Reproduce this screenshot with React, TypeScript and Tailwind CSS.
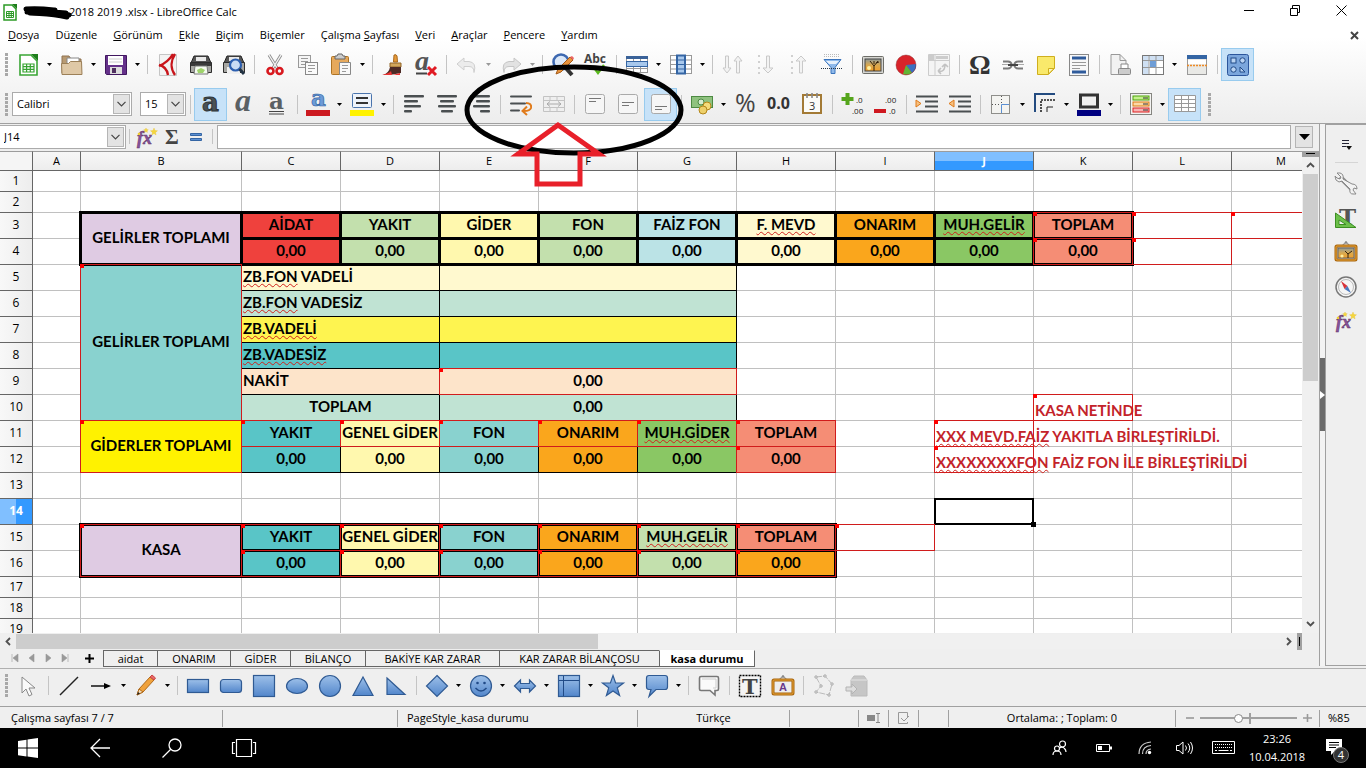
import React from "react";

const UI = "font-['Open_Sans','Noto_Sans',sans-serif]";

/* ---------- small helpers ---------- */

function Svg({ children, w = 24, h = 24 }: { children: React.ReactNode; w?: number; h?: number }) {
    return (
        <svg width={w} height={h} viewBox={`0 0 ${w} ${h}`} fill="none" className="block shrink-0 overflow-visible" aria-hidden="true">
            {children}
        </svg>
    );
}

function Tool({ label, active, more, children }: { label: string; active?: boolean; more?: boolean | "off"; children: React.ReactNode }) {
    return (
        <div className="flex items-center shrink-0">
            <button
                type="button"
                aria-label={label}
                className={`w-[33px] h-[33px] flex items-center justify-center border ${active ? "bg-[#c7e2f8] border-[#98cbee]" : "border-transparent"}`}
            >
                <Svg>{children}</Svg>
            </button>
            {more && (
                <button type="button" aria-label={`${label} menu`} className="w-[11px] h-[33px] flex items-center justify-center">
                    <svg width="5" height="3" viewBox="0 0 5 3" className="block"><path d="M0 0h5L2.5 3z" fill={more === "off" ? "#999" : "#000"} /></svg>
                </button>
            )}
        </div>
    );
}

const Sep = () => <div className="w-2 flex justify-center shrink-0"><div className="w-px h-[19px] bg-[#c4c4c4]" /></div>;

const Grip = () => (
    <div className="w-[5px] h-[23px] shrink-0 flex flex-col justify-between items-center">
        {[0, 1, 2, 3, 4, 5].map((i) => <div key={i} className="w-[3px] h-[3px] bg-[#a8a8a8]" />)}
    </div>
);

const Chevron = () => <svg width="9" height="6" viewBox="0 0 9 6" className="block"><path d="M.5 .8l4 4 4-4" fill="none" stroke="#444" strokeWidth="1.2" /></svg>;

const Lines = ({ xs }: { xs: [number, number][] }) => (
    <>
        {xs.map(([x, w], i) => <rect key={i} x={x} y={3 + i * 5} width={w} height="2.4" rx="1" fill="#4a4f51" />)}
    </>
);

const Fx = () => (
    <>
        <text x="2" y="18" fontFamily="Liberation Serif" fontStyle="italic" fontWeight="bold" fontSize="18" fill="#8a529b" stroke="#5c3566" strokeWidth=".5">fx</text>
        <path d="M19 2l1 2.500 2.500.3-2 1.600.6 2.600-2.100-1.400-2.200 1.400.7-2.600-2-1.600 2.500-.3zM11 2l.7 1.500 1.600.3-1.200 1 .3 1.600-1.400-.9-1.500.9.4-1.600-1.200-1 1.600-.3zM3 7h2v2H3z" fill="#f5d63d" stroke="#e0b91e" strokeWidth=".3" />
    </>
);

const Picture = () => (
    <>
        <rect x="1.500" y="3.500" width="21" height="17" rx="1" fill="#d5d5d0" stroke="#6d6d68" />
        <rect x="4" y="6" width="16" height="12" fill="url(#dusk)" stroke="#444" />
        <circle cx="8" cy="15" r="2" fill="#fff0a0" />
        <path d="M13 18v-5L9 8m4 5l4-5m-4 3V8m2 2l3-1" stroke="#35220c" />
    </>
);

const Frame = ({ children }: { children: React.ReactNode }) => (
    <>
        <path d="M7 7l5-5 5 5" stroke="#999" strokeWidth="1.200" />
        <circle cx="12" cy="2.500" r="1.200" fill="#888" />
        <rect x="2" y="6" width="20" height="14" rx="1" fill="#eee" stroke="#a8640b" strokeWidth="3" />
        <rect x="2" y="6" width="20" height="14" rx="1" stroke="#e9a53a" />
        {children}
    </>
);

const Cond = () => (
    <>
        <rect x="1.500" y="1.500" width="21" height="21" fill="#f3f3f1" stroke="#858580" />
        <rect x="4" y="4" width="16" height="4" fill="#c3f08c" stroke="#4ea30b" />
        <rect x="4" y="10" width="16" height="4" fill="#fbd9a8" stroke="#e07a10" />
        <rect x="4" y="16" width="16" height="4" fill="#f7b3b3" stroke="#d22" />
        <path d="M14 6h5M14 12h5M14 18h5" stroke="#333" />
    </>
);

/* ---------- sheet data ---------- */

type Cell = {
    t?: string;
    bad?: string;
    cs?: number;
    rs?: number;
    bg?: string;
    line?: "thick" | "thin" | "red" | "both";
    dot?: boolean;
    left?: boolean;
    red?: boolean;
    active?: boolean;
};

const lilac = "bg-[#dfcbe3]";
const green = "bg-[#c3e0ad]";
const leaf = "bg-[#8ac764]";
const cream = "bg-[#fff8ae]";
const pale = "bg-[#fff9cf]";
const orange = "bg-[#faa61c]";
const salmon = "bg-[#f58d75]";
const aqua = "bg-[#89d2cf]";
const teal = "bg-[#59c5c7]";
const mint = "bg-[#c0e3d3]";
const peach = "bg-[#fde4ca]";
const crimson = "bg-[#ef413d]";
const sky = "bg-[#bbe3e6]";
const lemon = "bg-[#fef450]";

const blank = (n: number): Cell[] => Array.from({ length: n }, () => ({}));
const Z = "0,00";

const rows: { n: number; h: string; cells: Cell[] }[] = [
    { n: 1, h: "h-[21px]", cells: blank(13) },
    { n: 2, h: "h-[21px]", cells: blank(13) },
    {
        n: 3, h: "h-[26px]", cells: [
            {},
            { t: "GELİRLER TOPLAMI", rs: 2, bg: lilac, line: "thick" },
            { t: "AİDAT", bg: crimson, line: "thick" },
            { t: "YAKIT", bg: green, line: "thick" },
            { t: "GİDER", bg: cream, line: "thick" },
            { t: "FON", bg: green, line: "thick" },
            { t: "FAİZ FON", bg: sky, line: "thick" },
            { bad: "F. MEVD", bg: pale, line: "thick" },
            { t: "ONARIM", bg: orange, line: "thick" },
            { bad: "MUH.GELİR", bg: leaf, line: "thick" },
            { t: "TOPLAM", bg: salmon, line: "both", dot: true },
            { line: "red", dot: true },
            { line: "red", dot: true },
        ],
    },
    {
        n: 4, h: "h-[26px]", cells: [
            {},
            ...[crimson, green, cream, green, sky, pale, orange, leaf].map((bg): Cell => ({ t: Z, bg, line: "thick" })),
            { t: Z, bg: salmon, line: "both", dot: true },
            { line: "red", dot: true },
            {},
        ],
    },
    {
        n: 5, h: "h-[26px]", cells: [
            {},
            { t: "GELİRLER TOPLAMI", rs: 6, bg: aqua, line: "red", dot: true },
            { bad: "ZB.FON", t: " VADELİ", cs: 2, left: true, bg: pale, line: "thin" },
            { cs: 3, bg: pale, line: "thin" },
            ...blank(6),
        ],
    },
    { n: 6, h: "h-[26px]", cells: [{}, { bad: "ZB.FON", t: " VADESİZ", cs: 2, left: true, bg: mint, line: "thin" }, { cs: 3, bg: mint, line: "thin" }, ...blank(6)] },
    { n: 7, h: "h-[26px]", cells: [{}, { bad: "ZB.VADELİ", cs: 2, left: true, bg: lemon, line: "thin" }, { cs: 3, bg: lemon, line: "thin" }, ...blank(6)] },
    { n: 8, h: "h-[26px]", cells: [{}, { bad: "ZB.VADESİZ", cs: 2, left: true, bg: teal, line: "thin" }, { cs: 3, bg: teal, line: "thin" }, ...blank(6)] },
    { n: 9, h: "h-[26px]", cells: [{}, { t: "NAKİT", cs: 2, left: true, bg: peach, line: "thin" }, { t: Z, cs: 3, bg: peach, line: "red", dot: true }, ...blank(6)] },
    {
        n: 10, h: "h-[26px]", cells: [
            {},
            { t: "TOPLAM", cs: 2, bg: mint, line: "thin" },
            { t: Z, cs: 3, bg: mint, line: "thin" },
            ...blank(3),
            { t: "KASA NETİNDE", left: true, red: true, line: "red", dot: true },
            ...blank(2),
        ],
    },
    {
        n: 11, h: "h-[26px]", cells: [
            {},
            { t: "GİDERLER TOPLAMI", rs: 2, bg: "bg-[#fff200]", line: "red", dot: true },
            { t: "YAKIT", bg: teal, line: "red", dot: true },
            { t: "GENEL GİDER", bg: cream, line: "red", dot: true },
            { t: "FON", bg: aqua, line: "red", dot: true },
            { t: "ONARIM", bg: orange, line: "red", dot: true },
            { bad: "MUH.GİDER", bg: leaf, line: "red", dot: true },
            { t: "TOPLAM", bg: salmon, line: "red", dot: true },
            {},
            { bad: "XXX MEVD.FAİZ", t: " YAKITLA BİRLEŞTİRİLDİ.", left: true, red: true, line: "red", dot: true },
            ...blank(3),
        ],
    },
    {
        n: 12, h: "h-[26px]", cells: [
            {},
            ...[teal, cream, aqua, orange, leaf].map((bg): Cell => ({ t: Z, bg, line: "thin" })),
            { t: Z, bg: salmon, line: "red", dot: true },
            {},
            { bad: "XXXXXXXXFON", t: " FAİZ FON İLE BİRLEŞTİRİLDİ", left: true, red: true, line: "red", dot: true },
            ...blank(3),
        ],
    },
    { n: 13, h: "h-[26px]", cells: blank(13) },
    { n: 14, h: "h-[26px]", cells: [...blank(9), { active: true }, ...blank(3)] },
    {
        n: 15, h: "h-[26px]", cells: [
            {},
            { t: "KASA", rs: 2, bg: lilac, line: "both", dot: true },
            { t: "YAKIT", bg: teal, line: "both", dot: true },
            { t: "GENEL GİDER", bg: cream, line: "both", dot: true },
            { t: "FON", bg: aqua, line: "both", dot: true },
            { t: "ONARIM", bg: orange, line: "both", dot: true },
            { bad: "MUH.GELİR", bg: green, line: "both", dot: true },
            { t: "TOPLAM", bg: salmon, line: "both", dot: true },
            { line: "red", dot: true },
            ...blank(4),
        ],
    },
    {
        n: 16, h: "h-[26px]", cells: [
            {},
            ...[teal, cream, aqua, orange, green, orange].map((bg): Cell => ({ t: Z, bg, line: "both", dot: true })),
            ...blank(5),
        ],
    },
    { n: 17, h: "h-[21px]", cells: blank(13) },
    { n: 18, h: "h-[21px]", cells: blank(13) },
    { n: 19, h: "h-[21px]", cells: blank(13) },
];

function SheetCell({ c }: { c: Cell }) {
    return (
        <td
            colSpan={c.cs}
            rowSpan={c.rs}
            className={`relative p-0 border-r border-b border-[#c0c0c0] whitespace-nowrap ${c.bg ?? ""} ${c.left ? "text-left pl-px" : "text-center"} ${c.red ? "text-[#c3232a] align-bottom" : "text-black align-middle"}`}
        >
            {(c.line === "thick" || c.line === "both") && <span className="absolute -inset-[2px] border-[3px] border-black z-10" />}
            {c.line === "thin" && <span className="absolute -inset-px border border-black z-10" />}
            {(c.line === "red" || c.line === "both") && <span className="absolute -inset-px border border-[#d01c1c] z-20" />}
            {c.dot && <span className="absolute -left-px -top-px w-1 h-1 bg-[#f00] z-20" />}
            {c.active && (
                <>
                    <span className="absolute -inset-px border-2 border-black z-20" />
                    <span className="absolute -right-[3px] -bottom-[3px] w-[5px] h-[5px] bg-black z-20" />
                </>
            )}
            {(c.t || c.bad) && (
                <span className={`relative z-10 block leading-[20px] ${c.red ? "" : "pb-[2px]"}`}>
                    {c.bad && <span className="underline decoration-wavy decoration-[#d0201c] decoration-1 underline-offset-1">{c.bad}</span>}
                    {c.t}
                </span>
            )}
        </td>
    );
}

function Sheet() {
    const head = "ABCDEFGHIJKLM".split("");
    return (
        <table className="table-fixed border-separate border-spacing-0 w-[1330px] font-['Lato','Open_Sans',sans-serif] font-bold text-[15px]">
            <colgroup>
                <col className="w-[33px]" />
                <col className="w-[48px]" />
                <col className="w-[161px]" />
                {head.slice(2).map((h) => <col key={h} className="w-[99px]" />)}
            </colgroup>
            <thead>
                <tr className={`h-5 text-[11px] ${UI}`}>
                    <th className="p-0 bg-[#f5f5f5] border-t border-t-[#9c9c9c] border-r border-b border-[#666]" />
                    {head.map((h) => (
                        <th
                            key={h}
                            scope="col"
                            className={`p-0 border-t border-t-[#9c9c9c] border-r border-b border-[#666] leading-4 ${h === "J" ? "bg-gradient-to-b from-[#80bfff] from-50% to-[#3399ff] to-50% text-white font-bold" : "bg-gradient-to-b from-[#f7f7f7] to-[#ededed] font-normal"}`}
                        >
                            {h}
                        </th>
                    ))}
                </tr>
            </thead>
            <tbody>
                {rows.map((r) => (
                    <tr key={r.n} className={r.h}>
                        <th
                            scope="row"
                            className={`p-0 border-r border-b border-[#666] text-xs leading-4 ${UI} ${r.n === 14 ? "bg-gradient-to-r from-[#80bfff] from-50% to-[#3399ff] to-50% text-white font-bold" : "bg-gradient-to-r from-[#f8f8f8] to-[#ededed] font-normal"}`}
                        >
                            {r.n}
                        </th>
                        {r.cells.map((c, i) => <SheetCell key={i} c={c} />)}
                    </tr>
                ))}
            </tbody>
        </table>
    );
}

/* ---------- window chrome ---------- */

const menus: [string, string, string][] = [
    ["", "D", "osya"], ["Dü", "z", "enle"], ["", "G", "örünüm"], ["", "E", "kle"], ["", "B", "içim"], ["Bi", "ç", "emler"],
    ["Çalışma ", "S", "ayfası"], ["", "V", "eri"], ["", "A", "raçlar"], ["", "P", "encere"], ["", "Y", "ardım"],
];

function TitleBar() {
    return (
        <header className="flex items-center h-6 pl-[3px]">
            <Svg w={14} h={18}>
                <path d="M1 2h8l4 4v11H1z" fill="#fff" stroke="#2c9a26" strokeWidth="1.500" />
                <path d="M9 1h5v5z" fill="#1e7d1b" />
                <path d="M3.500 8.500h7v6h-7zM3.500 10.500h7M3.500 12.500h7M6 8.500v6M8.300 8.500v6" stroke="#2c9a26" />
            </Svg>
            <svg width="50" height="16" viewBox="0 0 50 16" className="ml-[5px] block" aria-hidden="true">
                <path d="M4 5C16 4 24 5 33 6M5 8c12 1 26-1 42 3M8 9c12 1 20 0 37 4M31 8l13 1" fill="none" stroke="#000" strokeWidth="5" strokeLinecap="round" />
            </svg>
            <h1 className="text-[11px] -ml-[3px] grow">2018 2019 .xlsx - LibreOffice Calc</h1>
            <button type="button" aria-label="Minimize" className="w-[46px] h-6 pb-1 flex items-center justify-center"><Svg w={11} h={11}><path d="M0 5.500h10" stroke="#000" /></Svg></button>
            <button type="button" aria-label="Restore" className="w-[46px] h-6 pb-1 flex items-center justify-center"><Svg w={11} h={11}><path d="M.5 3.500h7v7h-7zM2.500 3V.5h7v7H8" stroke="#000" /></Svg></button>
            <button type="button" aria-label="Close" className="w-[46px] h-6 pb-1 flex items-center justify-center"><Svg w={11} h={11}><path d="M.5.5l10 10M10.500.5l-10 10" stroke="#000" /></Svg></button>
            <div className="w-[2px]" />
        </header>
    );
}

function MenuBar() {
    return (
        <nav className="flex items-center h-[22px] pl-2 pr-[7px] gap-4 text-[11px]">
            {menus.map(([a, u, b]) => <button key={a + u + b} type="button">{a}<u>{u}</u>{b}</button>)}
            <button type="button" aria-label="Close document" className="ml-auto"><Svg w={9} h={9}><path d="M1 1l7 7M8 1L1 8" stroke="#444" strokeWidth="2" /></Svg></button>
        </nav>
    );
}

function StandardBar() {
    return (
        <div className="flex items-center h-[39px] pl-1 pb-[2px] overflow-hidden" role="toolbar" aria-label="Standard">
            <Grip /><div className="w-[2px]" />
            <Tool label="New" more>
                <path d="M4 2h11l6 6v14H4z" fill="#fff" stroke="#3aa535" strokeWidth="1.600" />
                <path d="M15 1h7v7z" fill="#1e7d1b" />
                <path d="M7 11h11v8H7zM7 13.600h11M7 16.300h11M10.600 11v8M14.300 11v8" stroke="#36a331" strokeWidth="1.200" />
            </Tool>
            <Tool label="Open" more>
                <path d="M2 20V3h7l2 3h10v14z" fill="#b89a72" stroke="#8f7350" />
                <path d="M7 5h12v6H7z" fill="#fff" stroke="#888" />
                <path d="M1.500 10.500h7l2-2h11l.5 13H2z" fill="#dfc8a6" stroke="#9c8058" />
            </Tool>
            <Tool label="Save" more>
                <path d="M1.500 2.500h21v19h-20l-1-1z" fill="#65318a" stroke="#41175f" />
                <rect x="4" y="3" width="15" height="9" fill="#fff" />
                <path d="M5 6h13M5 9h13" stroke="#ccc" />
                <rect x="6" y="14" width="12" height="7" fill="#ddd" />
                <rect x="8" y="15" width="4" height="5" fill="#503060" />
            </Tool>
            <Sep />
            <Tool label="Export as PDF">
                <path d="M3.500 1.500h17v21h-17z" fill="#f3f3f3" stroke="#c5c5c5" />
                <path d="M17 1c-3 5-9 10-14 12M19 1c-4 6-5 14 0 21M3 12c5 1 8 4 9 10" stroke="#c8151b" strokeWidth="2.400" />
            </Tool>
            <Tool label="Print">
                <path d="M5 3h14l3 7H2z" fill="#555" stroke="#222" />
                <path d="M7 4h10v4H7z" fill="#e9e9e9" />
                <path d="M1.500 9.500h21v10h-21z" fill="#a8a8a4" stroke="#2d2d2d" />
                <path d="M2 10h20v3H2z" fill="#3a3a3a" />
                <path d="M6 13h12l1 8H5z" fill="#f4faef" stroke="#777" />
                <path d="M8 17l4-2 4 2-2 3H9z" fill="#9ed36a" />
            </Tool>
            <Tool label="Print Preview">
                <path d="M5 3h14l3 7H2z" fill="#555" stroke="#222" />
                <path d="M7 4h10v4H7z" fill="#e9e9e9" />
                <path d="M1.500 9.500h21v10h-21z" fill="#a8a8a4" stroke="#2d2d2d" />
                <path d="M5 14h13v7H5z" fill="#f0f0f0" />
                <circle cx="13.500" cy="12" r="5.500" fill="#c9dcf5" stroke="#2c5fb0" strokeWidth="2.200" />
                <path d="M17.500 16l4.500 5" stroke="#234" strokeWidth="3" />
            </Tool>
            <Sep />
            <Tool label="Cut">
                <path d="M6 2l8 13M18 2l-8 13" stroke="#8a8a8a" strokeWidth="3" /><path d="M6 2l8 13M18 2l-8 13" stroke="#f4f4f4" strokeWidth="1.400" />
                <circle cx="7.500" cy="18" r="3" stroke="#d8191f" strokeWidth="2.600" /><circle cx="16.500" cy="18" r="3" stroke="#d8191f" strokeWidth="2.600" />
            </Tool>
            <Tool label="Copy">
                <rect x="2.500" y="2.500" width="12" height="12" fill="#f5f5f5" stroke="#999" /><path d="M5 5.500h7M5 8.500h7M5 11.500h4" stroke="#999" />
                <rect x="9.500" y="9.500" width="12" height="12" fill="#fafafa" stroke="#888" /><path d="M12 12.500h7M12 15.500h7M12 18.500h4" stroke="#999" />
            </Tool>
            <Tool label="Paste" more>
                <rect x="2.500" y="3.500" width="17" height="18" rx="1" fill="#e6a95c" stroke="#ad7324" /><path d="M6 6V3h2l1-2h4l1 2h2v3z" fill="#ccc" stroke="#666" />
                <path d="M10.500 9.500h11v12h-11z" fill="#f8f8f8" stroke="#888" /><path d="M13 12.500h6M13 15.500h6M13 18.500h4" stroke="#999" />
            </Tool>
            <Sep />
            <Tool label="Clone Formatting">
                <path d="M13 2q2.500-1 3 1l.5 6h-4z" fill="#e59a3a" stroke="#a9681b" /><path d="M9 10h11v4H9z" fill="#d3a75c" stroke="#92662a" />
                <path d="M9 14h11v6q-8 2-18 2 6-2 7-8z" fill="#4d2a25" /><path d="M1 22q8-2 9-4l1 4zM12 22l7-2v2z" fill="#e33" />
            </Tool>
            <Tool label="Clear Formatting">
                <text x="1" y="17" fontFamily="Liberation Serif" fontStyle="italic" fontWeight="bold" fontSize="28" fill="#555">a</text>
                <path d="M2 20.500h11" stroke="#444" strokeWidth="2" /><path d="M14 14l8 8M22 14l-8 8" stroke="#e01b24" strokeWidth="3" />
            </Tool>
            <Sep />
            <Tool label="Undo" more="off"><path d="M2 11l7-6v3.500h5q8 1 5 11 0-6-5-6H9V17z" fill="#ececec" stroke="#cfcfcf" /></Tool>
            <Tool label="Redo" more="off"><path d="M22 11l-7-6v3.500h-5q-8 1-5 11 0-6 5-6h5V17z" fill="#e2e2e2" stroke="#c6c6c6" /></Tool>
            <Sep />
            <Tool label="Find & Replace">
                <circle cx="10" cy="9" r="7.500" fill="#dbe8f8" stroke="#3d68b0" strokeWidth="2.600" /><path d="M14 14l7 8" stroke="#333" strokeWidth="4" />
                <path d="M5 21l2-5L19 4l3 3L10 19z" fill="#e9933b" stroke="#a35a18" /><path d="M19 4l3 3 1-2-2-2z" fill="#e66" />
            </Tool>
            <Tool label="Spelling">
                <text x="0" y="10" fontFamily="Open Sans" fontWeight="bold" fontSize="12" fill="#444">Abc</text>
                <path d="M11 16l3 4 6-8" stroke="#58b81c" strokeWidth="2.400" />
            </Tool>
            <Sep />
            <Tool label="Row" more>
                <rect x="1.500" y="3.500" width="21" height="16" fill="#fff" stroke="#999" /><path d="M1 15.500h22M8.500 4v16M15.500 4v16" stroke="#999" />
                <rect x="1" y="3" width="22" height="3" fill="#3a6299" /><rect x="1.500" y="8.500" width="21" height="5" fill="#a8c8ec" stroke="#3465a4" />
            </Tool>
            <Tool label="Column" more>
                <rect x="1.500" y="2.500" width="21" height="18" fill="#fff" stroke="#999" /><path d="M1 7h22M1 11.500h22M1 16h22" stroke="#999" />
                <rect x="8" y="2.500" width="8" height="18" fill="#a8c8ec" stroke="#3465a4" strokeWidth="2" /><path d="M8 7h8M8 11.500h8M8 16h8" stroke="#3465a4" />
            </Tool>
            <Sep />
            <Tool label="Sort"><path d="M7.500 3v12H10l-4 5-4-5h2.500V3zM18.500 20V8H21l-4-5-4 5h2.500v12z" fill="#f3f3f3" stroke="#c9c9c9" /></Tool>
            <Tool label="Sort Ascending"><path d="M15.500 3v12H19l-5 5-5-5h3.500V3z" fill="#f3f3f3" stroke="#c9c9c9" /><path d="M4 2h2v2H4zM4 8h2v2H4zM4 14h2v2H4zM4 19h2v2H4z" fill="#d0d0d0" /></Tool>
            <Tool label="Sort Descending"><path d="M15.500 20V8H19l-5-5-5 5h3.500v12z" fill="#f3f3f3" stroke="#c9c9c9" /><path d="M4 2h2v2H4zM4 8h2v2H4zM4 14h2v2H4zM4 19h2v2H4z" fill="#d0d0d0" /></Tool>
            <Tool label="AutoFilter">
                <path d="M4 1.500h16M4 3.500h16" stroke="#bbb" strokeDasharray="1 1" />
                <path d="M4 6.500h17l-6 8v6h-4v-6z" fill="#8fb9ea" stroke="#3a74bd" /><path d="M6 8h13l-3 3H9z" fill="#e6f0fb" /><path d="M1 15.500h22" stroke="#234" strokeDasharray="1 1" />
            </Tool>
            <Sep />
            <Tool label="Insert Image"><Picture /></Tool>
            <Tool label="Insert Chart">
                <circle cx="12" cy="12" r="10" fill="#d8232a" /><path d="M12 12l10-1a10 10 0 0 1-4 9z" fill="#3b6fc0" /><path d="M12 12l6 8a10 10 0 0 1-9 1z" fill="#62b535" />
                <circle cx="12" cy="12" r="10" stroke="#7d1a1a" strokeOpacity=".4" />
            </Tool>
            <Tool label="Pivot Table">
                <path d="M1.500 1.500h21v21h-21zM8 2v20M2 7.500h20" stroke="#ccc" fill="#f4f4f4" /><path d="M2 2h5v5H2zM9 3h12v3H9z" fill="#ccc" />
                <path d="M11 18q7 2 7-7M11 18l3-3M11 18l3 3M18 11l-3 3M18 11l3 3" stroke="#c2c2c2" strokeWidth="1.600" />
            </Tool>
            <Sep />
            <Tool label="Special Character"><text x="1" y="21" fontFamily="Liberation Serif" fontWeight="bold" fontSize="27" fill="#333">Ω</text></Tool>
            <Tool label="Hyperlink">
                <path d="M2 8.500h5q3 0 4 3.500-1 3.500-4 3.500H2M22 8.500h-5q-3 0-4 3.500 1 3.500 4 3.500h5" stroke="#7a7a7a" strokeWidth="1.800" /><path d="M1 11.500h8M15 11.500h8" stroke="#aaa" /><path d="M7 12h10" stroke="#444" strokeWidth="2" />
            </Tool>
            <Tool label="Comment"><path d="M3.500 3.500h17v12l-6 6h-11z" fill="#f9e96b" stroke="#cfae1d" /><path d="M20 15.500h-5.500V21z" fill="#fff7b5" stroke="#cfae1d" /></Tool>
            <Tool label="Headers and Footers">
                <rect x="2.500" y="1.500" width="19" height="21" fill="#f8f8f8" stroke="#888" /><path d="M5 5h14M5 19h14" stroke="#2f5b9b" strokeWidth="3" /><path d="M5 9.500h14M5 12.500h14M5 15.500h8" stroke="#999" />
            </Tool>
            <Sep />
            <Tool label="Print Area">
                <path d="M3 1.500h9l6 6v14H3z" fill="#f2f2f2" stroke="#999" /><path d="M12 1.500v6h6" stroke="#999" />
                <path d="M13 11h7v5h-7z" fill="#fff" stroke="#888" /><rect x="10.500" y="15.500" width="12" height="6" rx="1" fill="#ccc" stroke="#888" />
            </Tool>
            <Tool label="Freeze Rows and Columns" more>
                <rect x="1.500" y="2.500" width="21" height="19" fill="#fff" stroke="#888" /><path d="M1.500 2.500h6v19h-6zM8 2.500h14V7H8z" fill="#cfe0f3" />
                <path d="M8 2v20M15 2v20M2 7.500h20M2 14.500h20" stroke="#999" /><path d="M9 8h6v6H9z" fill="#6e9dd6" /><path d="M1.500 2.500h21v19h-21z" stroke="#777" />
            </Tool>
            <Tool label="Split Window">
                <rect x="2.500" y="2.500" width="19" height="19" fill="#e9e9e6" stroke="#999" /><path d="M2 2h20v4H2z" fill="#3465a4" /><path d="M3 7h18v4H3z" fill="#fff" /><path d="M2 12.500h20" stroke="#f08a24" strokeWidth="1.400" strokeDasharray="2 1" />
            </Tool>
            <Sep />
            <Tool label="Show Draw Functions" active>
                <rect x="1.500" y="1.500" width="21" height="21" rx="2" fill="#7ba6dc" stroke="#2b559b" /><rect x="5" y="5" width="5" height="5" fill="#b9d3f2" stroke="#204a87" />
                <circle cx="16.500" cy="7.500" r="2.700" fill="#b9d3f2" stroke="#204a87" /><circle cx="7.500" cy="16.500" r="2.700" fill="#b9d3f2" stroke="#204a87" /><path d="M14 14v5h5z" fill="#b9d3f2" stroke="#204a87" />
            </Tool>
        </div>
    );
}

function FormatBar() {
    return (
        <div className="flex items-center h-[38px] pl-1 overflow-hidden" role="toolbar" aria-label="Formatting">
            <Grip />
            <label className="relative ml-[3px] w-[120px] h-6 flex shrink-0">
                <select aria-label="Font Name" className="appearance-none w-full h-full border border-[#ababab] bg-white pl-1 text-[11px] outline-none">
                    <option>Calibri</option>
                </select>
                <span className="absolute right-[2px] top-[2px] w-[17px] h-5 bg-[#e3e3e3] border border-[#b5b5b5] flex items-center justify-center pointer-events-none"><Chevron /></span>
            </label>
            <label className="relative ml-2 w-[46px] h-6 flex shrink-0">
                <select aria-label="Font Size" className="appearance-none w-full h-full border border-[#ababab] bg-white pl-1 text-[11px] outline-none">
                    <option>15</option>
                </select>
                <span className="absolute right-[2px] top-[2px] w-[17px] h-5 bg-[#e3e3e3] border border-[#b5b5b5] flex items-center justify-center pointer-events-none"><Chevron /></span>
            </label>
            <Sep />
            <Tool label="Bold" active><text x="3" y="19" fontFamily="DejaVu Serif" fontWeight="bold" fontSize="26" fill="#4a5257" stroke="#2e3436">a</text></Tool>
            <Tool label="Italic"><text x="3" y="19" fontFamily="Liberation Serif" fontStyle="italic" fontWeight="bold" fontSize="32" fill="#5a6063">a</text></Tool>
            <Tool label="Underline"><text x="4" y="17" fontFamily="DejaVu Serif" fontWeight="bold" fontSize="23" fill="#5a6063">a</text><path d="M4 19.500h15M4 22h15" stroke="#444" /></Tool>
            <Sep />
            <Tool label="Font Color" more><text x="5" y="14" fontFamily="DejaVu Serif" fontWeight="bold" fontSize="23" fill="#6c9bd8" stroke="#3465a4" strokeWidth=".7">a</text><path d="M0 18h24v6H0z" fill="#cc1a20" /></Tool>
            <Tool label="Highlighting" more>
                <rect x="2.500" y="1.500" width="19" height="14" rx="1" fill="#eef3fa" stroke="#4a74ad" /><path d="M6 6h12M6 11h12" stroke="#333" strokeWidth="2" /><path d="M0 18h24v6H0z" fill="#fff200" />
            </Tool>
            <Sep />
            <Tool label="Align Left"><Lines xs={[[2, 20], [2, 14], [2, 17], [2, 8]]} /></Tool>
            <Tool label="Center Horizontally"><Lines xs={[[2, 20], [5, 14], [3, 18], [6, 12]]} /></Tool>
            <Tool label="Align Right"><Lines xs={[[2, 20], [8, 14], [5, 17], [12, 10]]} /></Tool>
            <Sep />
            <Tool label="Wrap Text">
                <path d="M2 4.500h20M2 11.500h14M2 18.500h8" stroke="#4a4f51" strokeWidth="2" strokeLinecap="round" /><path d="M17 11q6 0 5 5-1 3-7 3M18 14.500l-4.500 4.500 4.500 4" stroke="#e07b1c" strokeWidth="2" />
            </Tool>
            <Tool label="Merge and Center Cells">
                <path d="M1.500 4.500h21v15h-21zM1.500 8.500h21M1.500 15.500h21M8 4v4M15 4v4M8 16v4M15 16v4" stroke="#c3c3c3" fill="#efefef" /><path d="M5 12h14M8 9.500L5 12l3 2.500M16 9.500l3 2.500-3 2.500" stroke="#aaa" />
            </Tool>
            <Sep />
            <Tool label="Align Top"><rect x="2.500" y="2.500" width="19" height="19" rx="2" fill="#f6f6f6" stroke="#aaa" /><path d="M6 6.500h12M6 9.500h7" stroke="#777" /></Tool>
            <Tool label="Center Vertically"><rect x="2.500" y="2.500" width="19" height="19" rx="2" fill="#f6f6f6" stroke="#aaa" /><path d="M6 10.500h12M6 13.500h7" stroke="#777" /></Tool>
            <Tool label="Align Bottom" active><rect x="2.500" y="2.500" width="19" height="19" rx="2" fill="#f6f6f6" stroke="#aaa" /><path d="M6 14.500h12M6 17.500h7" stroke="#777" /></Tool>
            <Sep />
            <Tool label="Format as Currency" more>
                <rect x="1.500" y="4.500" width="21" height="11" fill="#8fc27f" stroke="#4d8a43" /><circle cx="11" cy="10" r="3" fill="#d5ecd0" stroke="#4d8a43" />
                <circle cx="17" cy="14" r="4" fill="#f5dc7a" stroke="#b3861a" /><circle cx="13" cy="18" r="4" fill="#edd06a" stroke="#b3861a" />
            </Tool>
            <Tool label="Format as Percent"><text x="1" y="20" fontFamily="Open Sans" fontSize="25" fill="#444">%</text></Tool>
            <Tool label="Format as Number"><text x="0" y="17" fontFamily="Open Sans" fontWeight="bold" fontSize="16" fill="#333">0.0</text></Tool>
            <Tool label="Format as Date">
                <rect x="3" y="3" width="18" height="18" fill="#fbfbf8" stroke="#a37a35" strokeWidth="2" /><path d="M7 1v5M12 1v5M17 1v5" stroke="#888" strokeWidth="1.600" /><text x="9" y="18" fontFamily="Open Sans" fontSize="11" fill="#333">3</text>
            </Tool>
            <Sep />
            <Tool label="Add Decimal Place">
                <path d="M6.500 1v12M.5 7h12" stroke="#55a51c" strokeWidth="4" /><text x="15" y="11" fontFamily="Open Sans" fontSize="8" fill="#222">.0</text><text x="11" y="22" fontFamily="Open Sans" fontSize="8" fill="#222">.00</text>
            </Tool>
            <Tool label="Delete Decimal Place">
                <text x="11" y="11" fontFamily="Open Sans" fontSize="8" fill="#222">.00</text><path d="M0 19h12" stroke="#cf1820" strokeWidth="4" /><text x="15" y="22" fontFamily="Open Sans" fontSize="8" fill="#222">.0</text>
            </Tool>
            <Sep />
            <Tool label="Increase Indent"><path d="M1 4.500h22M10 9.500h13M10 14.500h13M1 19.500h22" stroke="#4a4f51" strokeWidth="2.200" /><path d="M1 8v7l5-3.500z" fill="#f6c080" stroke="#df7a1a" /></Tool>
            <Tool label="Decrease Indent"><path d="M1 4.500h22M10 9.500h13M10 14.500h13M1 19.500h22" stroke="#4a4f51" strokeWidth="2.200" /><path d="M6 8v7l-5-3.500z" fill="#f6c080" stroke="#df7a1a" /></Tool>
            <Sep />
            <Tool label="Borders" more>
                <rect x="2.500" y="3.500" width="18" height="18" fill="#f4f4f1" stroke="#8f8f8b" /><path d="M12.500 4v9M3 12.500h9" stroke="#555" strokeDasharray="1 2" /><path d="M12.500 21v-8.500H20" stroke="#5b8fd2" />
            </Tool>
            <Tool label="Border Style" more><path d="M2 20V2h20" stroke="#234b80" strokeWidth="2" /><path d="M8 20V8h14" stroke="#222" strokeWidth="1.600" strokeDasharray="2 1" /><path d="M14 20v-5h6" stroke="#222" /></Tool>
            <Tool label="Border Color" more><rect x="3.500" y="3" width="17" height="12" fill="#f0f0f0" stroke="#333" strokeWidth="3" /><path d="M0 18h24v6H0z" fill="#000080" /></Tool>
            <Sep />
            <Tool label="Conditional Formatting" more><Cond /></Tool>
            <Tool label="Grid Lines" active><path d="M1.500 3.500h21v16h-21zM1.500 7.500h21M1.500 11.500h21M1.500 15.500h21M8.500 3.500v16M15.500 3.500v16" fill="#fff" stroke="#999" /></Tool>
            <div className="w-[6px]" /><Grip />
        </div>
    );
}

function FormulaBar() {
    return (
        <div className="flex items-center h-[27px] pb-px bg-[#efefef] text-[11px]">
            <div className="flex w-[126px] h-6 border border-l-0 border-[#ababab] bg-white p-px shrink-0">
                <input aria-label="Name Box" defaultValue="J14" className="grow min-w-0 pl-[3px] outline-none" />
                <button type="button" aria-label="Name list" className="w-[17px] shrink-0 bg-[#e3e3e3] border border-[#b5b5b5] flex items-center justify-center"><Chevron /></button>
            </div>
            <div className="ml-[3px] mr-[3px] w-px h-[15px] bg-[#c4c4c4]" />
            <button type="button" aria-label="Function Wizard" className="w-[25px] flex justify-center"><Svg w={22} h={22}><Fx /></Svg></button>
            <button type="button" aria-label="Sum" className="w-[25px] flex justify-center"><Svg w={16} h={20}><text x="2" y="17" fontFamily="Liberation Serif" fontWeight="bold" fontSize="21" fill="#444">Σ</text></Svg></button>
            <button type="button" aria-label="Formula" className="w-[25px] flex justify-center"><Svg w={12} h={10}><path d="M.5 1.500h11v2H.5zM.5 6.500h11v2H.5z" fill="#5b8fd2" stroke="#3465a4" /></Svg></button>
            <div className="ml-1 mr-1 w-px h-[15px] bg-[#c4c4c4]" />
            <input aria-label="Input line" className="grow min-w-0 h-6 border border-[#ababab] bg-white px-1 outline-none" />
            <button type="button" aria-label="Expand Formula Bar" className="mx-[4px] w-[18px] h-[22px] bg-[#e3e3e3] border border-[#b5b5b5] flex items-center justify-center">
                <Svg w={11} h={6}><path d="M0 0h11L5.500 6z" fill="#000" /></Svg>
            </button>
            <div className="w-[2px]" />
        </div>
    );
}

function SheetArea() {
    return (
        <div className="flex grow min-h-0 overflow-hidden">
            <div className="grow min-w-0 overflow-hidden bg-white"><Sheet /></div>
            <div className="w-[17px] shrink-0 bg-[#f0f0f0] flex flex-col items-center">
                <div className="w-full h-[6px] bg-[#a0a0a0] flex items-center justify-center"><div className="w-[9px] h-px bg-black" /></div>
                <button type="button" aria-label="Scroll up" className="h-[17px] flex items-center"><Svg w={9} h={6}><path d="M1 5l3.500-3.500L8 5" stroke="#505050" strokeWidth="1.800" /></Svg></button>
                <div className="grow w-[15px]"><div className="h-[47%] bg-[#cdcdcd]" /></div>
                <button type="button" aria-label="Scroll down" className="h-[17px] flex items-center"><Svg w={9} h={6}><path d="M1 1l3.500 3.500L8 1" stroke="#505050" strokeWidth="1.800" /></Svg></button>
            </div>
        </div>
    );
}

function SheetTabs() {
    const tabs: [string, string][] = [
        ["aidat", "w-[55px]"], ["ONARIM", "w-[74px]"], ["GİDER", "w-[61px]"], ["BİLANÇO", "w-[76px]"],
        ["BAKİYE KAR ZARAR", "w-[135px]"], ["KAR ZARAR BİLANÇOSU", "w-[161px]"], ["kasa durumu", "w-[96px]"],
    ];
    const nav: [string, string][] = [["First", "M2 0v8M8 0v8L3 4z"], ["Previous", "M7 0v8L2 4z"], ["Next", "M2 0v8l5-4z"], ["Last", "M7 0v8M1 0v8l5-4z"]];
    return (
        <div className="flex items-stretch h-[17px] pl-[6px] text-[11px]">
            {nav.map(([l, d]) => (
                <button key={l} type="button" aria-label={l} className="w-[17px] flex items-center justify-center"><Svg w={9} h={8}><path d={d} fill="#999" stroke="#999" strokeWidth=".6" /></Svg></button>
            ))}
            <button type="button" aria-label="Add sheet" className="w-[30px] flex items-center justify-center"><Svg w={9} h={9}><path d="M4.500 0v9M0 4.500h9" stroke="#000" strokeWidth="2" /></Svg></button>
            {tabs.map(([t, w], i) => (
                <button
                    key={t}
                    type="button"
                    className={`${w} shrink-0 border border-[#666] leading-[15px] whitespace-nowrap -ml-px ${i === 6 ? "bg-white font-bold border-t-transparent" : ""}`}
                >
                    {t}
                </button>
            ))}
        </div>
    );
}

function Sidebar() {
    return (
        <>
            <div className="w-[7px] shrink-0 border-x border-[#a0a0a0] bg-[#f3f3f3] flex items-center mb-[2px]">
                <button type="button" aria-label="Hide sidebar" className="w-full h-[73px] bg-[#6b6b6b] flex items-center justify-center"><Svg w={5} h={8}><path d="M0 0l5 4-5 4z" fill="#fff" /></Svg></button>
            </div>
            <aside className="w-10 shrink-0 flex flex-col items-center border-t border-b border-[#a0a0a0] bg-[#efefef] mb-[2px] pt-[7px]">
                <button type="button" aria-label="Sidebar Settings" className="h-6 flex items-center"><Svg w={11} h={11}><path d="M1 1.500h7M1 4.500h7M1 7.500h4" stroke="#223" /><path d="M5 7h6l-3 4z" fill="#111" /></Svg></button>
                <div className="w-[23px] h-px bg-[#d5d5d5] mt-[6px] mb-[2px]" />
                <button type="button" aria-label="Properties" className="h-[35px] flex items-center">
                    <Svg><path d="M6 6l12 12" stroke="#8a8a8a" strokeWidth="5" /><path d="M3 2l4 4-1 2-3-1-2-2q0 5 4 6l3-1 8 8q-1 5 3 5l3 0-3-4 1-2 3 1q0-5-5-5L9 8q1-5-3-6z" fill="#f2f2f2" stroke="#8a8a8a" /></Svg>
                </button>
                <button type="button" aria-label="Styles" className="h-[35px] flex items-center">
                    <Svg><text x="5" y="19" fontFamily="DejaVu Serif" fontWeight="bold" fontSize="23" fill="#555">T</text><path d="M1.500 7v14.500H22z" fill="#6cc04a" stroke="#3c8d22" /><path d="M5 14v4.500h7z" fill="#efefef" stroke="#3c8d22" /></Svg>
                </button>
                <button type="button" aria-label="Gallery" className="h-[33px] flex items-center">
                    <Svg><Frame><rect x="4" y="8" width="16" height="10" fill="url(#dusk)" stroke="#666" /><circle cx="8" cy="16" r="1.600" fill="#fff0a0" /><path d="M14 18v-4l-3-3m3 3l4-3" stroke="#35220c" /></Frame></Svg>
                </button>
                <button type="button" aria-label="Navigator" className="h-[37px] flex items-center">
                    <Svg><circle cx="12" cy="12" r="10" fill="#f5f5f5" stroke="#777" strokeWidth="1.500" /><circle cx="12" cy="12" r="7.500" stroke="#bbb" /><path d="M7 6l6.500 5-3 3z" fill="#d8323a" /><path d="M17 18l-6.500-4 3-3z" fill="#4a78bd" /></Svg>
                </button>
                <button type="button" aria-label="Functions" className="h-[33px] flex items-center"><Svg><Fx /></Svg></button>
            </aside>
        </>
    );
}

function DrawBar() {
    const b = { fill: "url(#blue)", stroke: "#2f5a93", strokeWidth: 1.2 };
    return (
        <div className="flex items-center h-[39px] pl-1 pb-[3px] border-t border-[#b0b0b0] bg-[#efefef] overflow-hidden" role="toolbar" aria-label="Drawing">
            <Grip /><div className="w-[2px]" />
            <Tool label="Select"><path d="M6 3v16l4-4 3 7 3-1.500-3-6.500h6z" fill="#fafafa" stroke="#888" /></Tool>
            <Sep />
            <Tool label="Line"><path d="M3 21L21 3" stroke="#222" strokeWidth="1.400" /></Tool>
            <Tool label="Lines and Arrows" more><path d="M1 12h15" stroke="#000" strokeWidth="1.400" /><path d="M14 9l7 3-7 3z" fill="#000" /></Tool>
            <Tool label="Curve" more><path d="M3 21l2-6L16 3l4 3L9 18z" fill="#f0a23c" stroke="#b06a1a" /><path d="M16 3l4 3 1.500-2-3.500-3z" fill="#e66a6a" stroke="#c44" /><path d="M3 21l2-6 4 3z" fill="#f3dcb8" stroke="#b06a1a" /><path d="M3 21l1-3 2 1.500z" fill="#222" /></Tool>
            <Sep />
            <Tool label="Rectangle"><rect x="1.500" y="5.500" width="21" height="13" {...b} /></Tool>
            <Tool label="Rounded Rectangle"><rect x="1.500" y="5.500" width="21" height="13" rx="3" {...b} /></Tool>
            <Tool label="Square"><rect x="1.500" y="1.500" width="21" height="21" {...b} /></Tool>
            <Tool label="Ellipse"><ellipse cx="12" cy="12" rx="10.500" ry="7.500" {...b} /></Tool>
            <Tool label="Circle"><circle cx="12" cy="12" r="10.500" {...b} /></Tool>
            <Tool label="Triangle"><path d="M12 3l10 18.500H2z" {...b} /></Tool>
            <Tool label="Right Triangle"><path d="M3 4l18 16.500H3z" {...b} /></Tool>
            <Sep />
            <Tool label="Basic Shapes" more><path d="M12 1.500L22.500 12 12 22.500 1.500 12z" {...b} /></Tool>
            <Tool label="Symbol Shapes" more><circle cx="12" cy="12" r="10.500" {...b} /><circle cx="8.500" cy="9" r="1.300" fill="#204a87" /><circle cx="15.500" cy="9" r="1.300" fill="#204a87" /><path d="M6.500 14q5.500 6 11 0" stroke="#204a87" strokeWidth="1.400" /></Tool>
            <Tool label="Block Arrows" more><path d="M1.500 12l6-6v3.500h9V6l6 6-6 6v-3.500h-9V18z" {...b} /></Tool>
            <Tool label="Flowchart" more><rect x="1.500" y="1.500" width="21" height="21" {...b} /><path d="M6.500 2v20M2 6.500h20" stroke="#204a87" /></Tool>
            <Tool label="Stars" more><path d="M12 1.500l2.600 7.500h7.900l-6.200 4.800 2.300 7.700-6.600-4.600-6.600 4.600 2.300-7.700L1.500 9h7.900z" {...b} /></Tool>
            <Tool label="Callouts" more><path d="M4 1.500h16q2.500 0 2.500 2.500v9q0 2.500-2.500 2.500h-9l-7 7 2-7H4q-2.500 0-2.500-2.500V4q0-2.500 2.500-2.500z" {...b} /></Tool>
            <Sep />
            <Tool label="Comment">
                <path d="M4 2.500h16q1.500 0 1.500 1.500v11q0 1.500-1.500 1.500h-2v4.500l-5-4.500H4q-1.500 0-1.500-1.500V4q0-1.500 1.500-1.500z" fill="#fafafa" stroke="#777" strokeWidth="1.600" />
                <path d="M5 5h14v9h-3" stroke="#ccc" />
            </Tool>
            <Sep />
            <Tool label="Text Box"><rect x="1.500" y="1.500" width="21" height="21" fill="#f4f4f4" stroke="#000" strokeWidth="1.400" strokeDasharray="2 1" /><text x="4" y="20" fontFamily="DejaVu Serif" fontWeight="bold" fontSize="21" fill="#444">T</text></Tool>
            <Tool label="Fontwork"><Frame><text x="8" y="17" fontFamily="Liberation Sans" fontWeight="bold" fontSize="11" fill="#6a3a8a">A</text></Frame></Tool>
            <Sep />
            <Tool label="Points"><path d="M4 3l9-1 7 8-3 11-13-3 5-6z" stroke="#bbb" strokeDasharray="6 1" /><path d="M3 2h2v2H3zM12 1h2v2h-2zM19 9h2v2h-2zM16 20h2v2h-2zM3 17h2v2H3zM8 11h2v2H8z" fill="#fff" stroke="#aaa" /></Tool>
            <Tool label="Toggle Extrusion"><path d="M6 6l3-4h10l3 4v16H6z" fill="#c6c6c6" stroke="#bbb" /><path d="M6 6h16" stroke="#e4e4e4" /><path d="M1 13h6v-3l5 5-5 5v-3H1z" fill="#ddd" stroke="#b3b3b3" /></Tool>
        </div>
    );
}

const Bar = () => <div className="w-px h-[17px] bg-[#a0a0a0] shrink-0" />;

function StatusBar() {
    return (
        <footer className="flex items-center h-[22px] pt-px border-t border-[#a0a0a0] bg-[#efefef] text-[11px] whitespace-nowrap">
            <div className="w-[222px] pl-[11px]">Çalışma sayfası 7 / 7</div><Bar />
            <div className="w-[174px]" /><Bar />
            <div className="w-[239px] pl-[9px]">PageStyle_kasa durumu</div><Bar />
            <div className="w-[151px] text-center">Türkçe</div><Bar />
            <div className="w-[68px]" /><Bar />
            <div className="w-[29px] flex justify-center"><Svg w={13} h={10}><path d="M0 2h8v6H0z" fill="#888" /><path d="M9 .5h4M9 9.500h4M11 0v10" stroke="#888" /></Svg></div><Bar />
            <div className="w-[29px] flex justify-center"><Svg w={13} h={13}><path d="M10.500 5V.5h-9v11h9V10M4 6l3 3 5-5" stroke="#999" /></Svg></div><Bar />
            <div className="w-[29px]" /><Bar />
            <div className="grow text-center">Ortalama: ; Toplam: 0</div><Bar />
            <div className="flex items-center w-[143px] pl-[10px] pr-[7px] gap-[6px]">
                <button type="button" aria-label="Zoom out"><Svg w={8} h={8}><path d="M0 4h8" stroke="#999" strokeWidth="1.600" /></Svg></button>
                <div className="relative grow min-w-0 h-[11px] flex items-center">
                    <span className="absolute left-1/2 top-0 w-[2px] h-[11px] bg-[#a0a0a0]" />
                    <input
                        type="range"
                        aria-label="Zoom"
                        defaultValue={39}
                        className="relative appearance-none w-full h-[2px] bg-[#a0a0a0] outline-none [&::-webkit-slider-thumb]:appearance-none [&::-webkit-slider-thumb]:w-[9px] [&::-webkit-slider-thumb]:h-[9px] [&::-webkit-slider-thumb]:rounded-full [&::-webkit-slider-thumb]:bg-white [&::-webkit-slider-thumb]:border [&::-webkit-slider-thumb]:border-[#888]"
                    />
                </div>
                <button type="button" aria-label="Zoom in"><Svg w={9} h={8}><path d="M0 4h9M4.500 0v8" stroke="#999" strokeWidth="1.600" /></Svg></button>
            </div>
            <Bar />
            <div className="w-[46px] pl-2">%85</div>
        </footer>
    );
}

function Taskbar() {
    return (
        <div className="flex items-center h-10 bg-black text-white text-[11px] shrink-0">
            <button type="button" aria-label="Start" className="w-14 flex justify-center"><Svg w={20} h={20}><path d="M0 3l8.500-1.200V9.500H0zM9.500 1.600L20 0v9.500H9.500zM0 10.500h8.500v8L0 17.200zM9.500 10.500H20V20L9.500 18.600z" fill="#fff" /></Svg></button>
            <button type="button" aria-label="Back" className="w-[88px] flex justify-center"><Svg w={20} h={20}><path d="M20 10H1M10 1l-9 9 9 9" stroke="#fff" strokeWidth="1.300" /></Svg></button>
            <button type="button" aria-label="Search" className="w-14 flex justify-center"><Svg w={20} h={20}><circle cx="13" cy="7" r="6" stroke="#fff" strokeWidth="1.300" /><path d="M9 11l-8.500 8.500" stroke="#fff" strokeWidth="1.300" /></Svg></button>
            <button type="button" aria-label="Task View" className="w-[88px] flex justify-center"><Svg w={24} h={20}><path d="M4.500 1.500h15v17h-15zM3 4.500H.5v11H3M21 4.500h2.500v11H21" stroke="#fff" strokeWidth="1.200" /></Svg></button>
            <div className="ml-auto flex items-center">
                <button type="button" aria-label="People" className="w-11 flex justify-center"><Svg w={16} h={16}><circle cx="10.500" cy="4" r="3" stroke="#fff" strokeWidth="1.200" /><circle cx="5" cy="8.500" r="2.500" stroke="#fff" strokeWidth="1.200" /><path d="M1 15q0-4 4-4t4 4M7.500 8q3-2 5 .5 1.500 1.500 1.500 3.500" stroke="#fff" strokeWidth="1.200" /></Svg></button>
                <button type="button" aria-label="Battery" className="w-11 flex justify-center"><Svg w={16} h={10}><path d="M.5 1.500h13v7H.5z" stroke="#fff" /><path d="M2 3h4v4H2zM14 3.500h2v3h-2z" fill="#fff" /></Svg></button>
                <button type="button" aria-label="Network" className="w-[38px] flex justify-center"><Svg w={14} h={14}><path d="M1 13Q1 2 13 1M4.500 13q0-8 8.500-8.500M8 13q0-4.500 5-5" stroke="#ccc" strokeWidth="1.200" /><circle cx="11.500" cy="11.500" r="1.700" fill="#fff" /></Svg></button>
                <button type="button" aria-label="Volume" className="w-10 flex justify-center"><Svg w={17} h={14}><path d="M.5 4.500H3L7 1v12L3 9.500H.5zM9.500 4.500q2 2.500 0 5M12 2.500q3.500 4.500 0 9M14.500 1q4 6 0 12" stroke="#fff" /></Svg></button>
                <button type="button" aria-label="Touch keyboard" className="w-[39px] flex justify-center"><Svg w={23} h={14}><path d="M.5.5h22v12H.5z" stroke="#fff" /><path d="M3 3.500h17M3 6.500h17" stroke="#fff" strokeDasharray="1 1" /><path d="M3 9.500h2M6.500 9.500h10M18 9.500h2" stroke="#fff" /></Svg></button>
                <div className="w-[68px] text-center leading-[18px]">23:26<br />10.04.2018</div>
                <button type="button" aria-label="Notifications" className="relative w-[47px] mr-2 flex justify-center">
                    <Svg w={28} h={26}><path d="M5 4h16v12h-7l-4 4v-4H5z" fill="#fff" /><path d="M8 7.500h10M8 10h10M8 12.500h7" stroke="#000" /></Svg>
                    <span className="absolute left-[22px] top-3 w-4 h-4 rounded-full bg-[#333] border border-[#777] leading-[14px] text-center">4</span>
                </button>
            </div>
        </div>
    );
}

export default function App() {
    return (
        <div className={`relative h-screen flex flex-col overflow-hidden bg-[#efefef] text-black ${UI}`}>
            <svg className="absolute w-0 h-0" aria-hidden="true">
                <defs>
                    <linearGradient id="blue" x1="0" y1="0" x2="0" y2="1"><stop offset="0" stopColor="#9dc0e9" /><stop offset="1" stopColor="#5286cb" /></linearGradient>
                    <linearGradient id="dusk" x1="0" y1="0" x2="0" y2="1"><stop offset="0" stopColor="#8f9a98" /><stop offset=".5" stopColor="#d9a950" /><stop offset="1" stopColor="#f2a02a" /></linearGradient>
                </defs>
            </svg>

            <div className="bg-gradient-to-b from-white from-30% to-[#ededed] border-b border-[#a0a0a0] shrink-0">
                <TitleBar />
                <MenuBar />
                <StandardBar />
                <FormatBar />
            </div>

            <div className="flex grow min-h-0">
                <main className="flex flex-col grow min-w-0">
                    <FormulaBar />
                    <SheetArea />
                    <div className="flex items-center h-[17px] pr-[17px] shrink-0">
                        <button type="button" aria-label="Scroll left" className="w-4 flex justify-center"><Svg w={6} h={9}><path d="M5 1L1.500 4.500 5 8" stroke="#505050" strokeWidth="1.800" /></Svg></button>
                        <div className="grow h-[15px] bg-[#f0f0f0]"><div className="h-full w-[46%] bg-[#cdcdcd]" /></div>
                        <button type="button" aria-label="Scroll right" className="w-4 flex justify-center"><Svg w={6} h={9}><path d="M1 1l3.500 3.500L1 8" stroke="#505050" strokeWidth="1.800" /></Svg></button>
                        <div className="w-[5px] h-[17px] bg-[#a0a0a0] flex items-center justify-center"><div className="w-px h-[9px] bg-black" /></div>
                    </div>
                    <SheetTabs />
                    <div className="h-px" />
                </main>
                <Sidebar />
            </div>

            <DrawBar />
            <StatusBar />
            <Taskbar />

            {/* hand drawn marks over the alignment buttons */}
            <svg className="absolute left-[460px] top-[60px] z-30 pointer-events-none" width="230" height="130" viewBox="0 0 230 130" fill="none" aria-hidden="true">
                <ellipse cx="114" cy="50" rx="107" ry="43" stroke="#000" strokeWidth="5" />
                <path d="M98 65L58 94h19v30h43V94h19z" stroke="#e8202a" strokeWidth="5" />
            </svg>
        </div>
    );
}
